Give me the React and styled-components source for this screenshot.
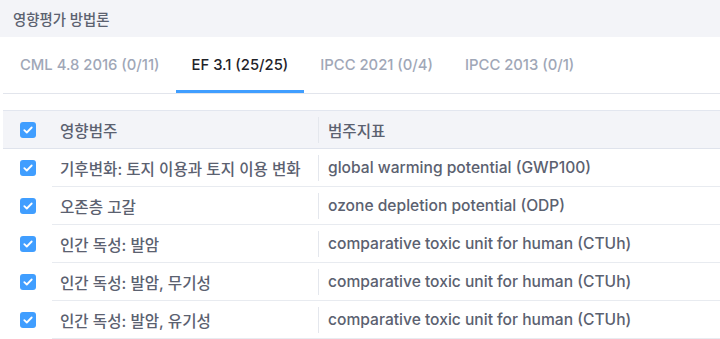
import styled, { createGlobalStyle } from 'styled-components'

const GlobalStyle = createGlobalStyle`
    * { box-sizing: border-box; }
    body {
        margin: 0;
        background: #fff;
        font-family: Inter, "Noto Sans CJK KR", sans-serif;
    }
`

const tabs = [
    { label: 'CML 4.8 2016 (0/11)' },
    { label: 'EF 3.1 (25/25)', active: true },
    { label: 'IPCC 2021 (0/4)' },
    { label: 'IPCC 2013 (0/1)' },
]

const rows = [
    { category: '기후변화: 토지 이용과 토지 이용 변화', indicator: 'global warming potential (GWP100)' },
    { category: '오존층 고갈', indicator: 'ozone depletion potential (ODP)' },
    { category: '인간 독성: 발암', indicator: 'comparative toxic unit for human (CTUh)' },
    { category: '인간 독성: 발암, 무기성', indicator: 'comparative toxic unit for human (CTUh)' },
    { category: '인간 독성: 발암, 유기성', indicator: 'comparative toxic unit for human (CTUh)' },
]

function Check() {
    return (
        <CheckBox>
            <svg width="10" height="8" viewBox="0 0 10 8">
                <path d="M1.3 4.1L3.8 6.5L8.7 1.5" fill="none" stroke="#fff" strokeWidth="1.8" strokeLinecap="round" strokeLinejoin="round" />
            </svg>
        </CheckBox>
    )
}

export default function App() {
    return (
        <Page>
            <GlobalStyle />
            <TopBar>영향평가 방법론</TopBar>
            <Body>
                <TabBar>
                    {tabs.map(t => (
                        <Tab key={t.label} $active={t.active}>{t.label}</Tab>
                    ))}
                </TabBar>
                <Table>
                    <HeadRow>
                        <CheckCell><Check /></CheckCell>
                        <Cell><span>영향범주</span></Cell>
                        <Cell $divided><Divided>범주지표</Divided></Cell>
                    </HeadRow>
                    {rows.map((r, i) => (
                        <Row key={i}>
                            <CheckCell><Check /></CheckCell>
                            <Cell $lined><span>{r.category}</span></Cell>
                            <Cell $lined $divided><Divided>{r.indicator}</Divided></Cell>
                        </Row>
                    ))}
                </Table>
            </Body>
        </Page>
    )
}

const Page = styled.div`
    width: 720px;
    height: 339px;
    overflow: hidden;
`

const TopBar = styled.div`
    height: 37px;
    background: #f3f4f8;
    padding-left: 13px;
    display: flex;
    align-items: center;
    font-size: 14.4px;
    font-weight: 500;
    color: #5c6270;
`

const Body = styled.div`
    padding-left: 3px;
`

const TabBar = styled.div`
    display: flex;
    border-bottom: 1px solid #e2e5ec;
    padding-left: 1px;
`

const Tab = styled.div`
    height: 56px;
    padding: 0 16px;
    display: flex;
    align-items: center;
    font-size: 14.8px;
    font-weight: 500;
    color: ${p => p.$active ? '#1f2229' : '#a0a7b7'};
    box-shadow: ${p => p.$active ? 'inset 0 -3px 0 #409eff' : 'none'};
`

const Table = styled.div`
    margin-top: 16px;
    border-top: 1px solid #e2e6ef;
`

const HeadRow = styled.div`
    display: grid;
    grid-template-columns: 49px 266px 1fr;
    height: 38px;
    background: #f3f4f8;
    border-bottom: 1px solid #dfe3ec;
`

const Row = styled.div`
    display: grid;
    grid-template-columns: 49px 266px 1fr;
    height: 38px;
`

const CheckCell = styled.div`
    display: flex;
    align-items: center;
    justify-content: center;
    padding-left: 1px;
`

const Cell = styled.div`
    display: flex;
    align-items: center;
    padding-left: ${p => p.$divided ? '0' : '8px'};
    font-size: 15.6px;
    font-weight: 500;
    color: #5b6170;
    white-space: nowrap;
    border-bottom: ${p => p.$lined ? '1px solid #e8ebf0' : 'none'};
`

const Divided = styled.span`
    display: flex;
    align-items: center;
    height: 26px;
    padding-left: 9px;
    border-left: 1px solid #e4e7ed;
`

const CheckBox = styled.span`
    width: 16px;
    height: 16px;
    border-radius: 3px;
    background: #409eff;
    display: flex;
    align-items: center;
    justify-content: center;
`
